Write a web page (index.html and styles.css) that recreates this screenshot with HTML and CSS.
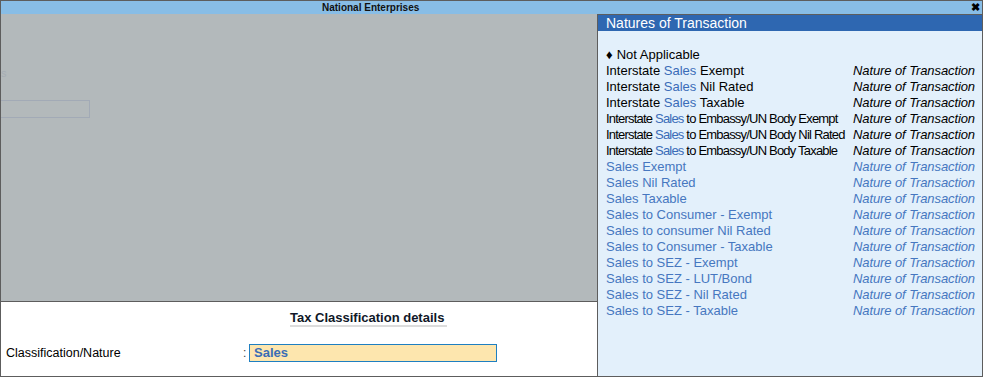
FILE: index.html
```html
<!DOCTYPE html>
<html>
<head>
    <meta charset="utf-8">
    <title>National Enterprises</title>
    <link rel="stylesheet" href="styles.css">
</head>
<body>
<div class="window">
    <div class="titlebar">
        <span class="title">National Enterprises</span>
        <span class="close">&#x2716;</span>
    </div>
    <div class="main">
        <div class="left">
            <div class="backdrop">
                <div class="ghost-char">s</div>
                <div class="ghost-box"></div>
            </div>
            <div class="panel">
                <div class="panel-head"><span>Tax Classification details</span></div>
                <div class="field">
                    <span class="field-label">Classification/Nature</span>
                    <span class="colon">:</span>
                    <span class="field-input">Sales</span>
                </div>
            </div>
        </div>
        <div class="popup">
            <div class="popup-head">Natures of Transaction</div>
            <div class="popup-body">
                <div class="row"><span class="name"><span class="dia">&#9830;</span>Not Applicable</span></div>
                <div class="row"><span class="name">Interstate <b class="hl">Sales</b> Exempt</span><span class="kind">Nature of Transaction</span></div>
                <div class="row"><span class="name">Interstate <b class="hl">Sales</b> Nil Rated</span><span class="kind">Nature of Transaction</span></div>
                <div class="row"><span class="name">Interstate <b class="hl">Sales</b> Taxable</span><span class="kind">Nature of Transaction</span></div>
                <div class="row tight"><span class="name">Interstate <b class="hl">Sales</b> to Embassy/UN Body Exempt</span><span class="kind">Nature of Transaction</span></div>
                <div class="row tight"><span class="name">Interstate <b class="hl">Sales</b> to Embassy/UN Body Nil Rated</span><span class="kind">Nature of Transaction</span></div>
                <div class="row tight"><span class="name">Interstate <b class="hl">Sales</b> to Embassy/UN Body Taxable</span><span class="kind">Nature of Transaction</span></div>
                <div class="row match"><span class="name">Sales Exempt</span><span class="kind">Nature of Transaction</span></div>
                <div class="row match"><span class="name">Sales Nil Rated</span><span class="kind">Nature of Transaction</span></div>
                <div class="row match"><span class="name">Sales Taxable</span><span class="kind">Nature of Transaction</span></div>
                <div class="row match"><span class="name">Sales to Consumer - Exempt</span><span class="kind">Nature of Transaction</span></div>
                <div class="row match"><span class="name">Sales to consumer Nil Rated</span><span class="kind">Nature of Transaction</span></div>
                <div class="row match"><span class="name">Sales to Consumer - Taxable</span><span class="kind">Nature of Transaction</span></div>
                <div class="row match"><span class="name">Sales to SEZ - Exempt</span><span class="kind">Nature of Transaction</span></div>
                <div class="row match"><span class="name">Sales to SEZ - LUT/Bond</span><span class="kind">Nature of Transaction</span></div>
                <div class="row match"><span class="name">Sales to SEZ - Nil Rated</span><span class="kind">Nature of Transaction</span></div>
                <div class="row match"><span class="name">Sales to SEZ - Taxable</span><span class="kind">Nature of Transaction</span></div>
            </div>
        </div>
    </div>
</div>
</body>
</html>
```

FILE: styles.css
```css
html, body {
    margin: 0;
    padding: 0;
    background: #fff;
}

body {
    font-family: "Liberation Sans", Arial, sans-serif;
    font-size: 12px;
    color: #000;
}

.window {
    width: 983px;
    height: 377px;
    box-sizing: border-box;
    border: 1px solid #5d5d5d;
    display: flex;
    flex-direction: column;
    overflow: hidden;
}

.titlebar {
    height: 13px;
    background: #88bde6;
    display: flex;
    align-items: center;
}

.title {
    padding-left: 321px;
    font-size: 10px;
    font-weight: bold;
    color: #111;
}

.close {
    margin-left: auto;
    margin-right: 2px;
    font-size: 11px;
    line-height: 11px;
    font-weight: bold;
}

.main {
    flex: 1;
    display: flex;
    min-height: 0;
}

.left {
    width: 596px;
    flex-shrink: 0;
    display: flex;
    flex-direction: column;
}

.backdrop {
    flex: 1;
    background: #b3b9bb;
}

.ghost-char {
    margin-top: 52px;
    height: 14px;
    line-height: 14px;
    font-size: 11px;
    color: #a6adb4;
}

.ghost-box {
    margin-top: 20px;
    width: 88px;
    height: 16px;
    border: 1px solid #a2aab6;
    border-left: 0;
}

.panel {
    height: 74px;
    border-top: 1px solid #5d5d5d;
    background: #fff;
}

.panel-head {
    padding-left: 289px;
    padding-top: 9px;
    height: 22px;
    box-sizing: border-box;
}

.panel-head span {
    display: inline-block;
    font-size: 13px;
    font-weight: bold;
    color: #101828;
    line-height: 14px;
    padding-right: 3px;
    border-bottom: 2px solid #dcdcdc;
}

.field {
    display: flex;
    align-items: center;
    margin-top: 20px;
    height: 18px;
}

.field-label {
    width: 237px;
    padding-left: 5px;
    font-size: 12.5px;
}

.colon {
    width: 6px;
    color: #444;
}

.field-input {
    width: 248px;
    height: 18px;
    box-sizing: border-box;
    border: 1px solid #1f7fc1;
    background: #fde6ae;
    padding-left: 4px;
    line-height: 16px;
    font-size: 13px;
    font-weight: bold;
    color: #3a6db6;
}

.popup {
    flex: 1;
    min-width: 0;
    overflow: hidden;
    border-left: 1px solid #5d5d5d;
    border-top: 1px solid #5d5d5d;
    background: #e3f0fb;
    display: flex;
    flex-direction: column;
}

.popup-head {
    height: 16px;
    line-height: 16px;
    background: #2e67b1;
    color: #fff;
    font-size: 14px;
    padding-left: 8px;
}

.popup-body {
    padding: 16px 7px 0 8px;
    font-size: 13px;
}

.row {
    display: flex;
    justify-content: space-between;
    gap: 4px;
    height: 16px;
    line-height: 16px;
}

.name {
    white-space: nowrap;
}

.dia {
    font-size: 13px;
    margin-right: 4px;
}

.hl {
    font-weight: normal;
    color: #3a6cb8;
}

.tight .name {
    letter-spacing: -0.8px;
}

.kind {
    flex-shrink: 0;
    white-space: nowrap;
    font-style: italic;
    letter-spacing: -0.1px;
}

.match {
    color: #4677c0;
}
```
